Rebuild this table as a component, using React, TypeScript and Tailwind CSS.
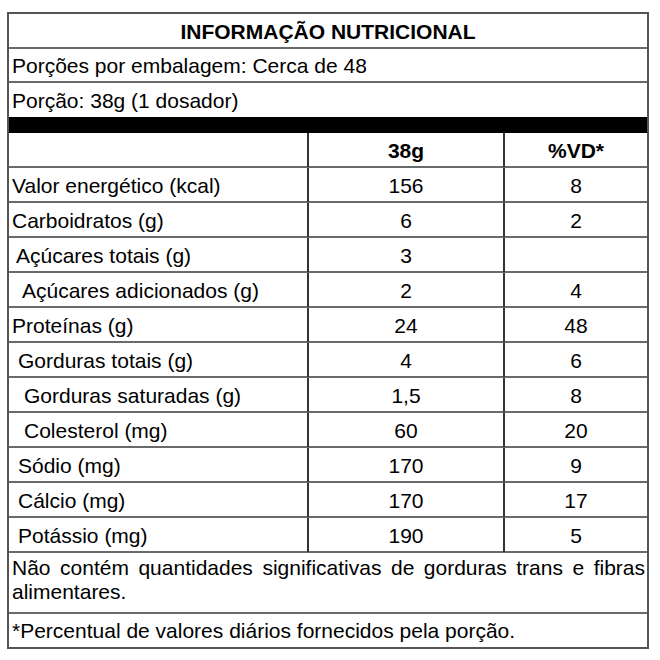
import React from 'react';

type Row = { label: string; indent: string; qty: string; vd: string };

const rows: Row[] = [
  { label: 'Valor energético (kcal)', indent: 'pl-[3px]', qty: '156', vd: '8' },
  { label: 'Carboidratos (g)', indent: 'pl-[3px]', qty: '6', vd: '2' },
  { label: 'Açúcares totais (g)', indent: 'pl-[7px]', qty: '3', vd: '' },
  { label: 'Açúcares adicionados (g)', indent: 'pl-[13px]', qty: '2', vd: '4' },
  { label: 'Proteínas (g)', indent: 'pl-[3px]', qty: '24', vd: '48' },
  { label: 'Gorduras totais (g)', indent: 'pl-[9px]', qty: '4', vd: '6' },
  { label: 'Gorduras saturadas (g)', indent: 'pl-[15px]', qty: '1,5', vd: '8' },
  { label: 'Colesterol (mg)', indent: 'pl-[15px]', qty: '60', vd: '20' },
  { label: 'Sódio (mg)', indent: 'pl-[9px]', qty: '170', vd: '9' },
  { label: 'Cálcio (mg)', indent: 'pl-[9px]', qty: '170', vd: '17' },
  { label: 'Potássio (mg)', indent: 'pl-[9px]', qty: '190', vd: '5' },
];

export default function App() {
  return (
    <div className="w-[660px] h-[660px] bg-white pt-[12px] pl-[7px] font-['Liberation_Sans',Arial,sans-serif] text-[21px] text-black">
      <div className="w-[642px] border-2 border-[#555]">
        {/* title */}
        <div className="h-[35px] flex items-center justify-center pt-[2px] border-b-2 border-[#6a6a6a] font-bold">
          INFORMAÇÃO NUTRICIONAL
        </div>
        <div className="h-[34px] flex items-center pl-[3px] pt-[2px] border-b-2 border-[#6a6a6a]">
          Porções por embalagem: Cerca de 48
        </div>
        <div className="h-[34px] flex items-center pl-[3px] pt-[1px]">
          Porção: 38g (1 dosador)
        </div>
        <div className="h-[16px] bg-black" />

        {/* header */}
        <div className="grid grid-cols-[300px_196px_1fr] h-[35px] border-b-2 border-[#6a6a6a] font-bold">
          <div className="border-r-2 border-[#333]" />
          <div className="flex items-center justify-center pt-[2px] border-r-2 border-[#333]">38g</div>
          <div className="flex items-center justify-center pt-[2px]">%VD*</div>
        </div>

        {rows.map((r) => (
          <div key={r.label} className="grid grid-cols-[300px_196px_1fr] h-[35px] border-b-2 border-[#6a6a6a]">
            <div className={`flex items-center pt-[2px] border-r-2 border-[#333] ${r.indent}`}>{r.label}</div>
            <div className="flex items-center justify-center pt-[2px] border-r-2 border-[#333]">{r.qty}</div>
            <div className="flex items-center justify-center pt-[2px]">{r.vd}</div>
          </div>
        ))}

        {/* footnotes */}
        <div className="h-[61px] pl-[3px] pr-[2px] pt-[3px] border-b-2 border-[#6a6a6a] leading-[24px] text-justify">
          Não contém quantidades significativas de gorduras trans e fibras alimentares.
        </div>
        <div className="h-[33px] flex items-center pl-[3px] pt-[1px]">
          *Percentual de valores diários fornecidos pela porção.
        </div>
      </div>
    </div>
  );
}
